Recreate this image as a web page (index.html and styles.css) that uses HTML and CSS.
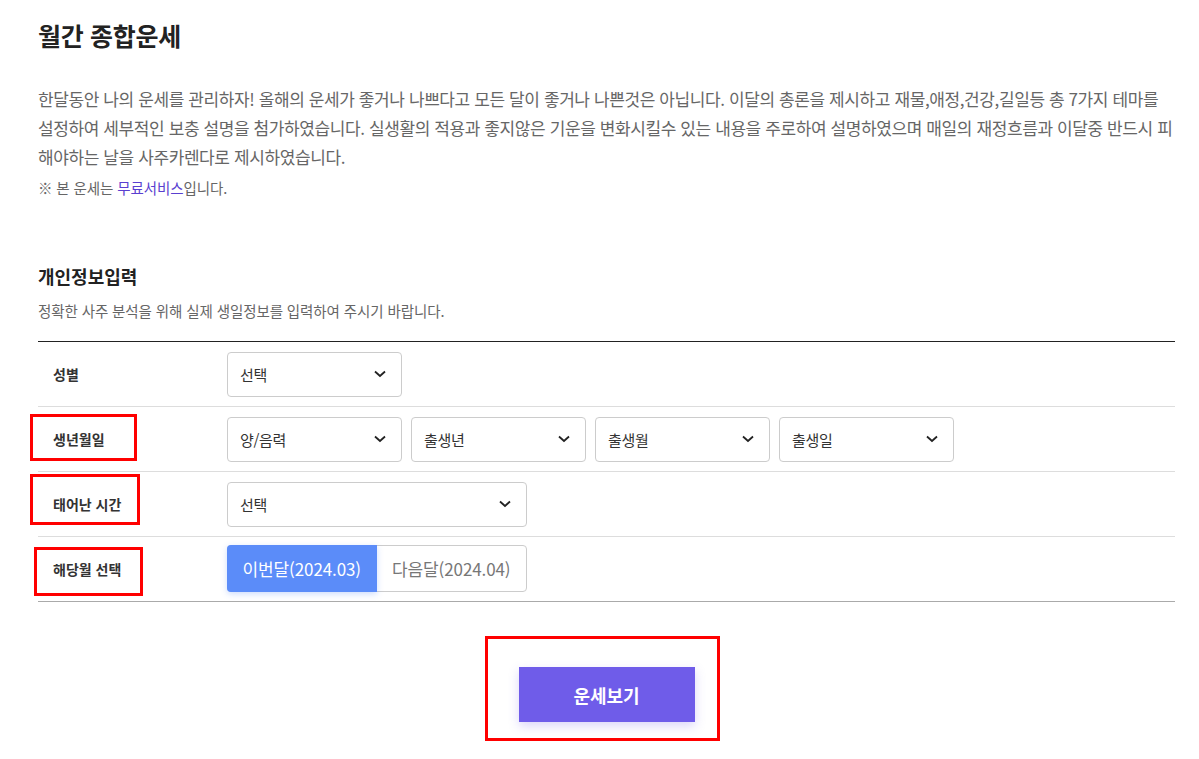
FILE: index.html
```html
<!DOCTYPE html>
<html lang="ko">
<head>
    <meta charset="UTF-8">
    <meta name="viewport" content="width=device-width, initial-scale=1.0">
    <title>월간 종합운세</title>
    <link rel="stylesheet" href="styles.css">
</head>
<body>
<div class="page">

    <h1 class="title">월간 종합운세</h1>

    <p class="desc">한달동안 나의 운세를 관리하자! 올해의 운세가 좋거나 나쁘다고 모든 달이 좋거나 나쁜것은 아닙니다. 이달의 총론을 제시하고 재물,애정,건강,길일등 총 7가지 테마를 설정하여 세부적인 보충 설명을 첨가하였습니다. 실생활의 적용과 좋지않은 기운을 변화시킬수 있는 내용을 주로하여 설명하였으며 매일의 재정흐름과 이달중 반드시 피해야하는 날을 사주카렌다로 제시하였습니다.</p>
    <p class="note">※ 본 운세는 <a href="#">무료서비스</a>입니다.</p>

    <h2 class="sub-title">개인정보입력</h2>
    <p class="sub-desc">정확한 사주 분석을 위해 실제 생일정보를 입력하여 주시기 바랍니다.</p>

    <div class="info-table">
        <div class="row">
            <div class="label">성별</div>
            <div class="field">
                <div class="select w175"><span>선택</span><svg viewBox="0 0 12 8"><polyline points="1,1.5 6,6 11,1.5"/></svg></div>
            </div>
        </div>
        <div class="row">
            <div class="label">생년월일</div>
            <div class="field">
                <div class="select w175"><span>양/음력</span><svg viewBox="0 0 12 8"><polyline points="1,1.5 6,6 11,1.5"/></svg></div>
                <div class="select w175"><span>출생년</span><svg viewBox="0 0 12 8"><polyline points="1,1.5 6,6 11,1.5"/></svg></div>
                <div class="select w175"><span>출생월</span><svg viewBox="0 0 12 8"><polyline points="1,1.5 6,6 11,1.5"/></svg></div>
                <div class="select w175"><span>출생일</span><svg viewBox="0 0 12 8"><polyline points="1,1.5 6,6 11,1.5"/></svg></div>
            </div>
        </div>
        <div class="row">
            <div class="label">태어난 시간</div>
            <div class="field">
                <div class="select w300"><span>선택</span><svg viewBox="0 0 12 8"><polyline points="1,1.5 6,6 11,1.5"/></svg></div>
            </div>
        </div>
        <div class="row row-month">
            <div class="label">해당월 선택</div>
            <div class="field">
                <div class="toggle">
                    <button type="button" class="on">이번달(2024.03)</button>
                    <button type="button">다음달(2024.04)</button>
                </div>
            </div>
        </div>
    </div>

    <div class="btn-area">
        <button type="button" class="btn-submit">운세보기</button>
    </div>

    <div class="mark" style="left:30px;top:414px;width:107px;height:47px"></div>
    <div class="mark" style="left:30px;top:474px;width:110px;height:51px"></div>
    <div class="mark" style="left:34px;top:547px;width:109px;height:49px"></div>
    <div class="mark" style="left:485px;top:636px;width:235px;height:105px"></div>
</div>
</body>
</html>
```

FILE: styles.css
```css
* {
    box-sizing: border-box;
}
body {
    margin: 0;
    font-family: "Noto Sans CJK KR", "Noto Sans", sans-serif;
    color: #333;
    background: #fff;
}
.page {
    position: relative;
    width: 1175px;
    padding-left: 38px;
    padding-top: 1px;
}
.title {
    margin: 17px 0 0;
    font-size: 25px;
    font-weight: bold;
    letter-spacing: -0.3px;
    line-height: 34px;
    color: #222;
}
.desc {
    margin: 32px 0 0;
    padding-right: 2px;
    font-size: 17px;
    line-height: 29px;
    letter-spacing: -0.4px;
    color: #666;
}
.note {
    margin: 7px 0 0;
    font-size: 14.5px;
    letter-spacing: -0.1px;
    line-height: 20px;
    color: #666;
}
.note a {
    color: #5a3fd0;
    text-decoration: none;
}
.sub-title {
    margin: 66px 0 0;
    font-size: 18px;
    font-weight: bold;
    line-height: 24px;
    color: #222;
}
.sub-desc {
    margin: 13px 0 0;
    font-size: 14.5px;
    letter-spacing: -0.1px;
    line-height: 20px;
    color: #666;
}
.info-table {
    margin-top: 20px;
    border-top: 1px solid #222;
    border-bottom: 1px solid #aaa;
}
.row {
    display: flex;
    align-items: center;
    height: 65px;
    border-bottom: 1px solid #ddd;
}
.row:last-child {
    height: 64px;
    border-bottom: none;
}
.label {
    width: 189px;
    padding-left: 15px;
    font-size: 14px;
    font-weight: bold;
    color: #333;
}
.field {
    display: flex;
    gap: 9px;
}
.select {
    display: flex;
    align-items: center;
    justify-content: space-between;
    height: 45px;
    padding: 0 15px 0 12px;
    border: 1px solid #ccc;
    border-radius: 4px;
    font-size: 15px;
    letter-spacing: -0.3px;
    color: #333;
}
.select svg {
    width: 12px;
    height: 8px;
    fill: none;
    stroke: #222;
    stroke-width: 1.8;
}
.w175 {
    width: 175px;
}
.w300 {
    width: 300px;
}
.row-month .field {
    margin-top: -2px;
}
.toggle {
    display: flex;
    width: 300px;
    height: 47px;
    border: 1px solid #ccc;
    border-radius: 4px;
}
.toggle button {
    flex: 1;
    border: none;
    background: none;
    font-family: inherit;
    font-size: 17px;
    letter-spacing: -0.1px;
    color: #777;
    padding: 0;
    border-radius: 0 4px 4px 0;
}
.toggle button.on {
    margin: -1px 0 -1px -1px;
    background: #5b8cf9;
    color: #fff;
    border-radius: 4px 0 0 4px;
    box-shadow: 0 2px 6px rgba(91, 140, 249, 0.3);
}
.btn-area {
    display: flex;
    justify-content: center;
    padding-top: 65px;
    padding-bottom: 40px;
}
.btn-submit {
    width: 176px;
    height: 55px;
    border: none;
    background: #6f5ce9;
    color: #fff;
    font-family: inherit;
    font-size: 18px;
    font-weight: bold;
    box-shadow: 0 4px 10px rgba(111, 92, 233, 0.25);
}
.mark {
    position: absolute;
    border: 3px solid #f00;
}
```
